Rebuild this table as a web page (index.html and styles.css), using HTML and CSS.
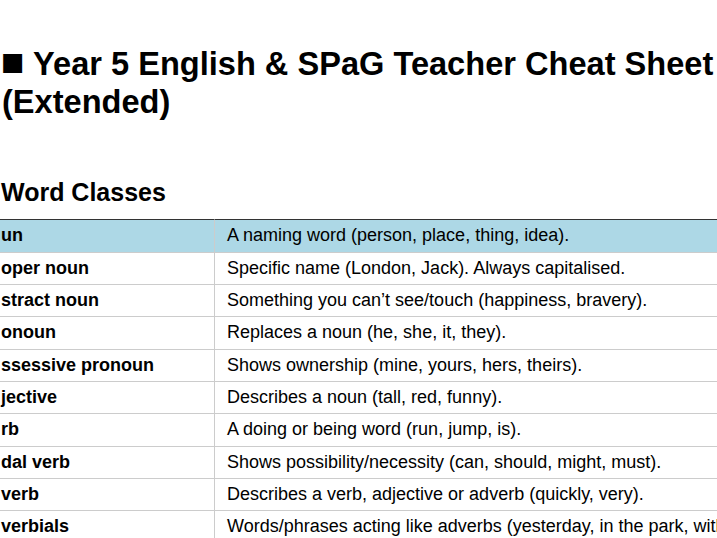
FILE: index.html
```html
<!DOCTYPE html>
<html lang="en">
<head>
<meta charset="utf-8">
<title>Year 5 English &amp; SPaG Teacher Cheat Sheet (Extended)</title>
<link rel="stylesheet" href="styles.css">
</head>
<body>
<main class="page">
  <h1 class="title"><span class="mark">■</span> Year 5 English &amp; SPaG Teacher Cheat Sheet<br>(Extended)</h1>
  <h2 class="section-title">Word Classes</h2>
  <table class="sheet">
    <tbody>
      <tr class="head-row"><td class="term">un</td><td class="desc">A naming word (person, place, thing, idea).</td></tr>
      <tr><td class="term">oper noun</td><td class="desc">Specific name (London, Jack). Always capitalised.</td></tr>
      <tr><td class="term">stract noun</td><td class="desc">Something you can’t see/touch (happiness, bravery).</td></tr>
      <tr><td class="term">onoun</td><td class="desc">Replaces a noun (he, she, it, they).</td></tr>
      <tr><td class="term">ssessive pronoun</td><td class="desc">Shows ownership (mine, yours, hers, theirs).</td></tr>
      <tr><td class="term">jective</td><td class="desc">Describes a noun (tall, red, funny).</td></tr>
      <tr><td class="term">rb</td><td class="desc">A doing or being word (run, jump, is).</td></tr>
      <tr><td class="term">dal verb</td><td class="desc">Shows possibility/necessity (can, should, might, must).</td></tr>
      <tr><td class="term">verb</td><td class="desc">Describes a verb, adjective or adverb (quickly, very).</td></tr>
      <tr><td class="term">verbials</td><td class="desc">Words/phrases acting like adverbs (yesterday, in the park, with a smile).</td></tr>
      <tr><td class="term">eposition</td><td class="desc">Shows place, time or direction (under, before, through).</td></tr>
    </tbody>
  </table>
</main>
</body>
</html>
```
FILE: styles.css
```css
html, body {
  margin: 0;
  padding: 0;
  overflow: hidden;
  background: #ffffff;
}

body {
  font-family: "Liberation Sans", Arial, sans-serif;
  color: #000000;
}

.page {
  padding-top: 45px;
}

.title {
  margin: 0 0 0 2px;
  font-size: 32.6px;
  line-height: 37.5px;
  font-weight: bold;
  white-space: nowrap;
}

.mark {
  font-size: 1.2em;
  line-height: 0;
  margin-left: -1px;
}

.section-title {
  margin: 58px 0 0 1px;
  font-size: 25px;
  line-height: 28.3px;
  font-weight: bold;
}

.sheet {
  margin-top: 13px;
  border-collapse: separate;
  border-spacing: 0;
  width: 860px;
  font-size: 18px;
  table-layout: fixed;
}

.sheet td {
  padding: 5px 11px 5px 12px;
  line-height: 21.33px;
  border-bottom: 1px solid #cccccc;
  white-space: nowrap;
  overflow: hidden;
  vertical-align: middle;
}

.sheet .term {
  width: 202px;
  padding-left: 1px;
  padding-right: 11px;
  font-weight: bold;
  border-right: 1px solid #cccccc;
}

.head-row td {
  background: #add8e6;
  border-top: 1px solid #333333;
}
```
